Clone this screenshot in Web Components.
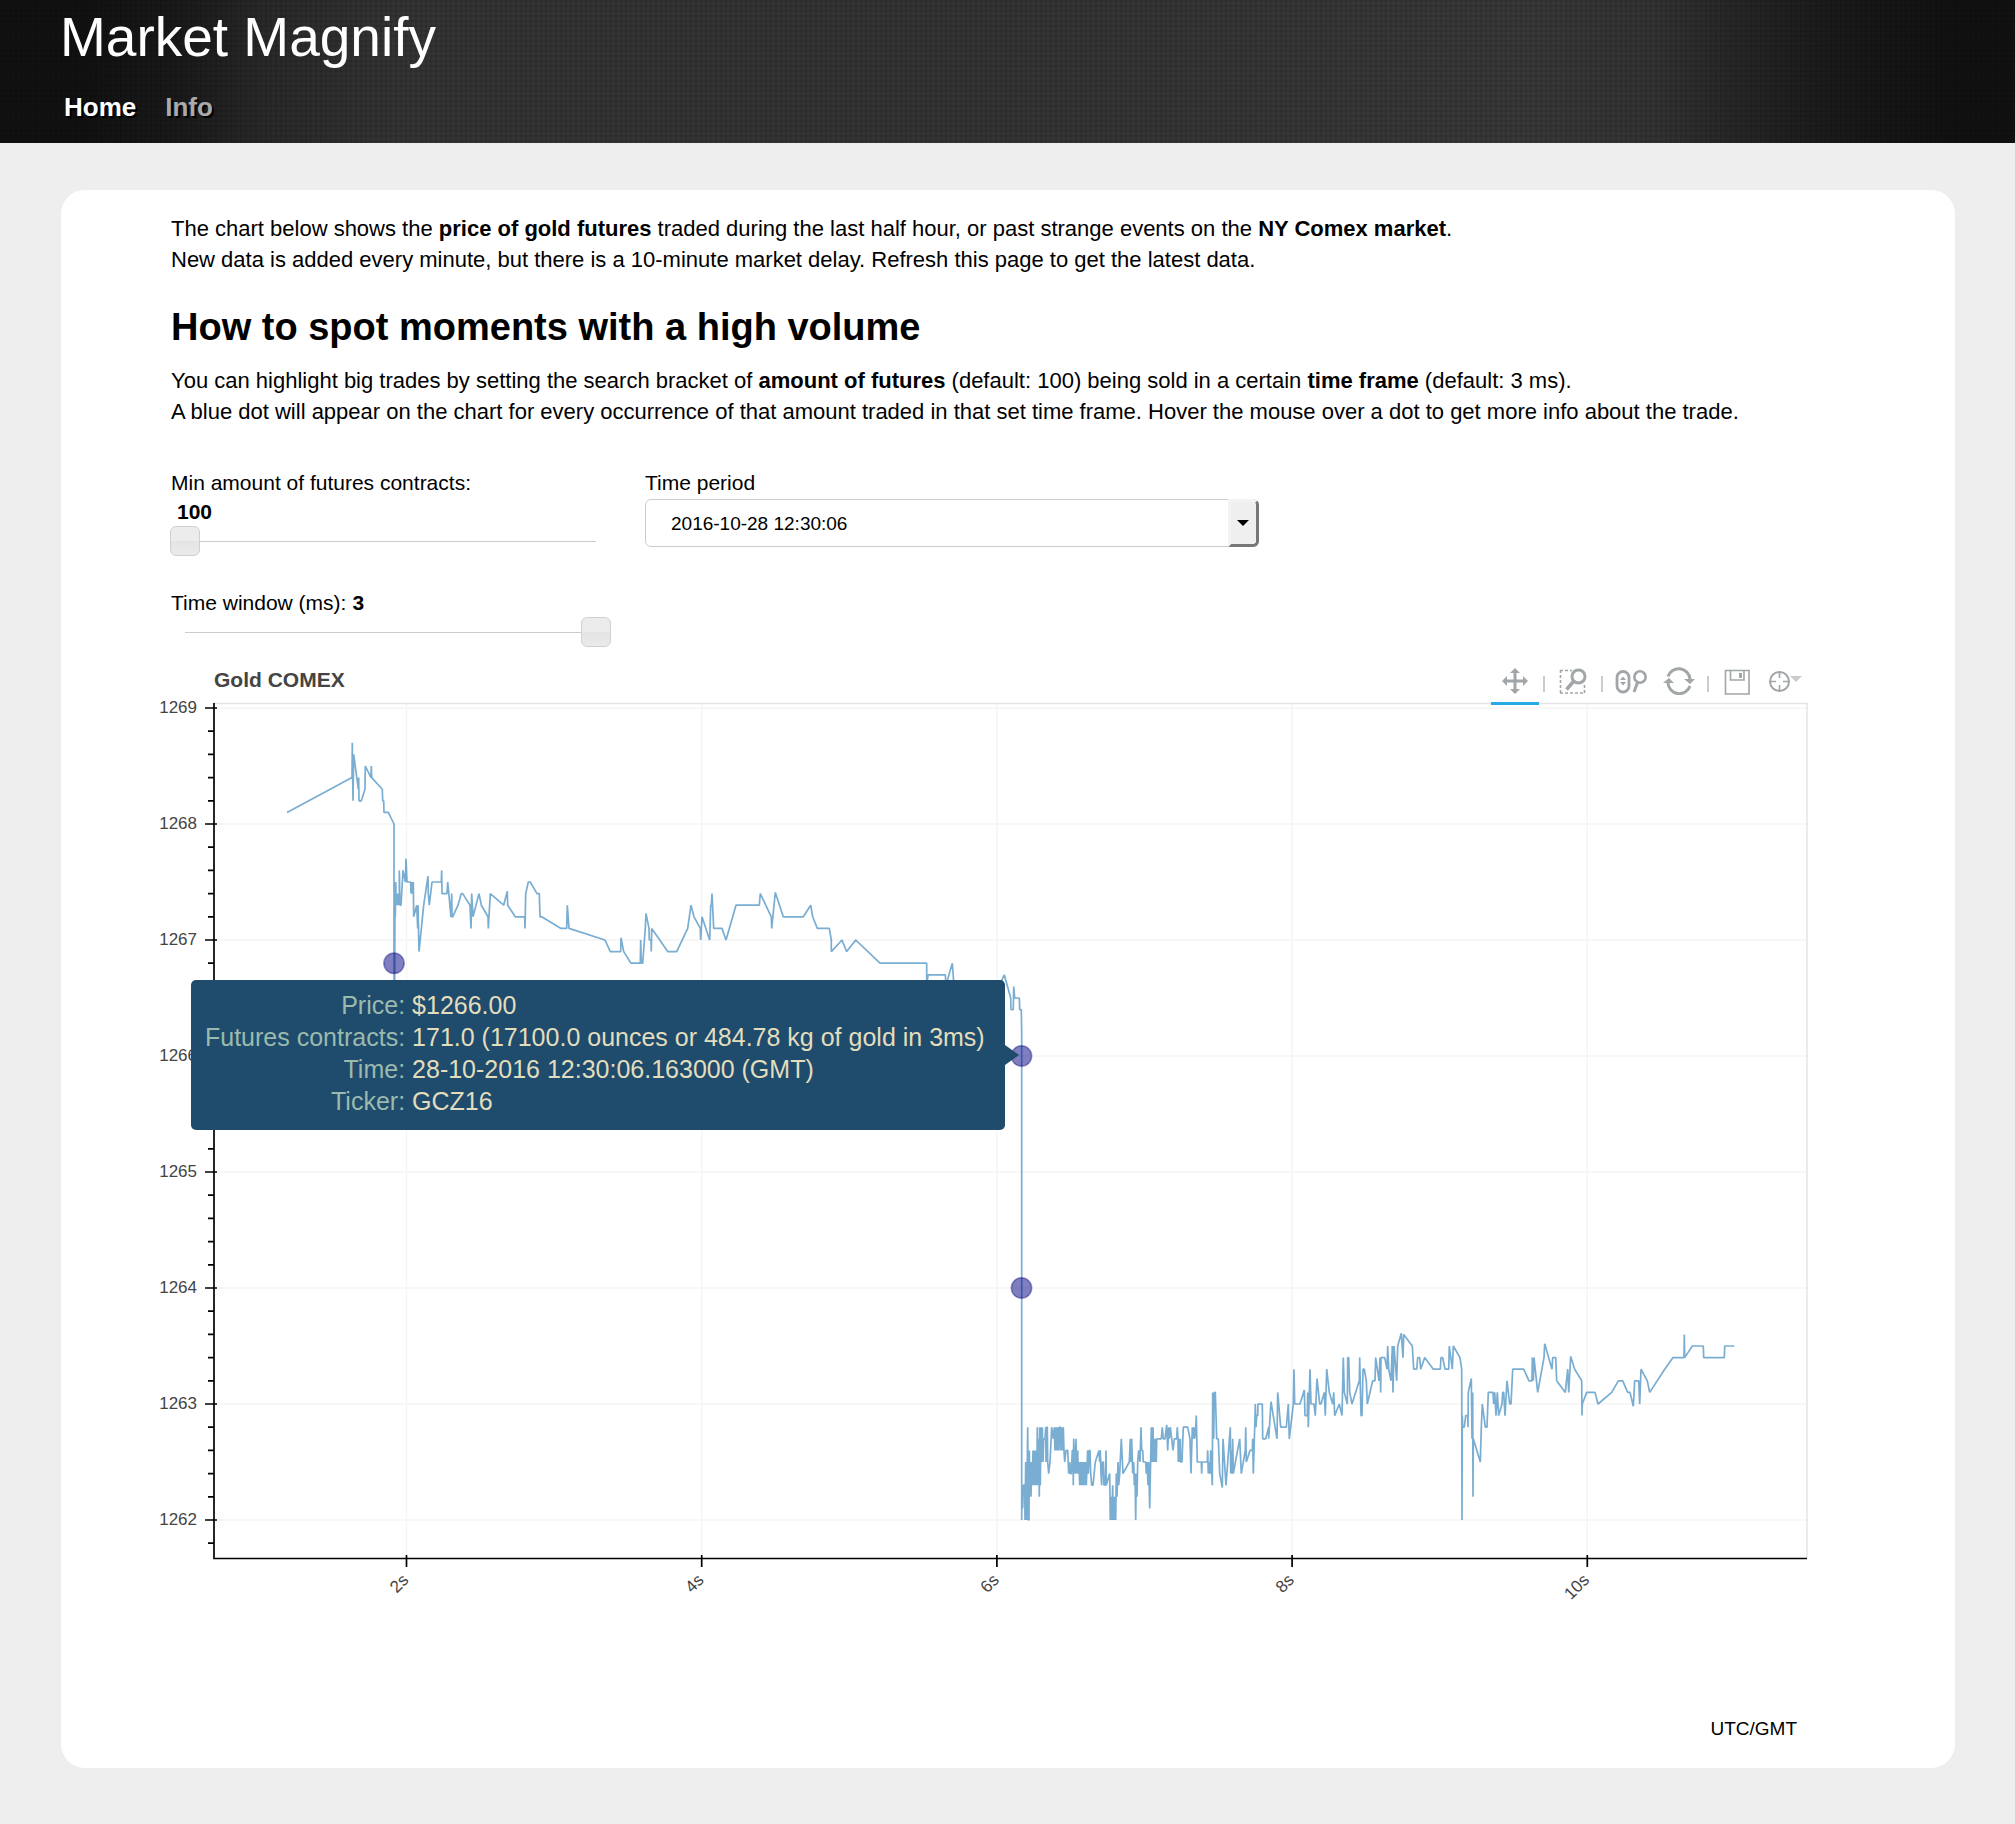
<!DOCTYPE html>
<html lang="en">
<head>
<meta charset="utf-8">
<title>Market Magnify</title>
<style>
  body {
    margin: 0;
    background-color: #eee;
    color: #000;
    font-family: "Liberation Sans", Arial, sans-serif;
    font-size: 22px;
    line-height: 31px;
  }
  main { padding: 47px 60px 55px 61px; }
  p { margin: 0; }
  h2 {
    margin: 30px 0 16px;
    font-size: 38px;
    line-height: 44px;
  }
</style>
</head>
<body>

<site-header heading="Market Magnify">
  <a href="#home" class="active">Home</a>
  <a href="#info">Info</a>
</site-header>

<main>
  <content-card>
    <p>The chart below shows the <b>price of gold futures</b> traded during the last half hour, or past strange events on the <b>NY Comex market</b>.<br>
    New data is added every minute, but there is a 10-minute market delay. Refresh this page to get the latest data.</p>
    <h2>How to spot moments with a high volume</h2>
    <p>You can highlight big trades by setting the search bracket of <b>amount of futures</b> (default: 100) being sold in a certain <b>time frame</b> (default: 3 ms).<br>
    A blue dot will appear on the chart for every occurrence of that amount traded in that set time frame. Hover the mouse over a dot to get more info about the trade.</p>
    <trade-filters></trade-filters>
    <price-chart heading="Gold COMEX">
      <chart-tooltip>
        <span>Price:</span><span>$1266.00</span>
        <span>Futures contracts:</span><span>171.0 (17100.0 ounces or 484.78 kg of gold in 3ms)</span>
        <span>Time:</span><span>28-10-2016 12:30:06.163000 (GMT)</span>
        <span>Ticker:</span><span>GCZ16</span>
      </chart-tooltip>
    </price-chart>
    <span slot="footer">UTC/GMT</span>
  </content-card>
</main>

<script>
class SiteHeader extends HTMLElement {

  constructor() {
    super();
    this.attachShadow({mode: 'open'});
  }

  connectedCallback() {
    this.shadowRoot.innerHTML = this.template;
    this.shadowRoot.querySelector('h1').textContent = this.getAttribute('heading');
  }

  get template() {
    return `<style>
        :host {
          display: block;
          padding: 7px 60px 21px;
          background:
            repeating-linear-gradient(90deg, rgba(0,0,0,.09) 0 2px, transparent 2px 5px),
            repeating-linear-gradient(rgba(0,0,0,.09) 0 2px, transparent 2px 5px),
            linear-gradient(90deg, #111 4%, #1a1a1a 9%, #292929 13%, #343434 20%, #343434 50%, #383838 76%, #333 82%, #272727 86%, #1a1a1a 91%, #111 97%);
        }
        h1 {
          margin: 0 0 25px;
          color: #fff;
          font-size: 55px;
          font-weight: normal;
          line-height: 60px;
        }
        nav {
          display: flex;
          gap: 29px;
          padding-left: 4px;
          font-size: 26px;
          font-weight: bold;
          line-height: 30px;
        }
        ::slotted(a) {
          color: #aaa;
          text-decoration: none;
          text-shadow: 2px 2px 0 #000;
        }
        ::slotted(a.active) { color: #fff; }
      </style>
      <h1></h1>
      <nav><slot></slot></nav>
      `;
  }
}

customElements.define('site-header', SiteHeader);


class ContentCard extends HTMLElement {

  constructor() {
    super();
    this.attachShadow({mode: 'open'});
  }

  connectedCallback() {
    this.shadowRoot.innerHTML = this.template;
  }

  get template() {
    return `<style>
        :host {
          display: block;
          padding: 23px 146px 27px 110px;
          background-color: #fff;
          border-radius: 24px;
        }
        footer {
          margin-top: 109px;
          padding-right: 12px;
          font-size: 19px;
          line-height: 24px;
          text-align: right;
        }
      </style>
      <slot></slot>
      <footer><slot name="footer"></slot></footer>
      `;
  }
}

customElements.define('content-card', ContentCard);


class TradeFilters extends HTMLElement {

  constructor() {
    super();
    this.attachShadow({mode: 'open'});
  }

  connectedCallback() {
    this.shadowRoot.innerHTML = this.template;
    this.enlazar('amount');
    this.enlazar('window');
  }

  // keeps the number beside each label in step with its slider
  enlazar(id) {
    var slider = this.shadowRoot.getElementById(id);
    var valor = this.shadowRoot.getElementById(id + '-value');
    slider.addEventListener('input', function () {
      valor.textContent = slider.value;
    });
  }

  get template() {
    return `<style>
        :host {
          display: grid;
          grid-template-columns: minmax(0, 440px) minmax(0, 614px);
          column-gap: 34px;
          margin-top: 41px;
          font-size: 21px;
          line-height: 29px;
        }
        label, output { display: block; }
        output { font-weight: bold; }
        #amount-value { padding-left: 6px; }
        .inline { display: flex; gap: 6px; margin-top: 32px; }
        input {
          display: block;
          -webkit-appearance: none;
          appearance: none;
          width: calc(100% + 1px);
          height: 30px;
          margin: 0 0 0 -1px;
          background: linear-gradient(#ccc, #ccc) center / calc(100% - 30px) 1px no-repeat;
        }
        input::-webkit-slider-thumb {
          -webkit-appearance: none;
          box-sizing: border-box;
          width: 30px;
          height: 30px;
          border: 1px solid #d0d0d0;
          border-radius: 6px;
          background: linear-gradient(#ececec 50%, #e4e4e4 50%, #eaeaea);
        }
        .select {
          display: grid;
          margin-top: 2px;
        }
        select, .arrow { grid-area: 1 / 1; }
        select {
          -webkit-appearance: none;
          appearance: none;
          width: 100%;
          height: 48px;
          padding: 0 40px 0 25px;
          border: 1px solid #ccc;
          border-radius: 6px;
          background-color: #fff;
          color: #000;
          font: 19px "Liberation Sans", Arial, sans-serif;
        }
        .arrow {
          display: grid;
          place-items: center;
          justify-self: end;
          box-sizing: border-box;
          width: 31px;
          height: 48px;
          padding-right: 2px;
          border: 3px solid #777;
          border-top-color: #f3f3f3;
          border-left-color: #f3f3f3;
          border-radius: 0 6px 6px 0;
          background-color: #efefef;
          pointer-events: none;
        }
      </style>
      <div>
        <label for="amount">Min amount of futures contracts:</label>
        <output id="amount-value" for="amount">100</output>
        <input type="range" id="amount" min="100" max="500" value="100">
        <div class="inline">
          <label for="window">Time window (ms):</label>
          <output id="window-value" for="window">3</output>
        </div>
        <input type="range" id="window" min="1" max="3" value="3">
      </div>
      <div>
        <label for="period">Time period</label>
        <div class="select">
          <select id="period"><option>2016-10-28 12:30:06</option></select>
          <span class="arrow"><svg width="12" height="6"><path d="M0 0h12L6 6z"/></svg></span>
        </div>
      </div>
      `;
  }
}

customElements.define('trade-filters', TradeFilters);


class ChartToolbar extends HTMLElement {

  constructor() {
    super();
    this.attachShadow({mode: 'open'});
  }

  connectedCallback() {
    this.shadowRoot.innerHTML = this.template;
    var botones = this.shadowRoot.querySelectorAll('button');
    for (let b of botones) {
      b.addEventListener('click', function () {
        for (let x of botones) x.classList.remove('active');
        b.classList.add('active');
      });
    }
  }

  get template() {
    return `<style>
        :host { display: flex; align-items: center; }
        button {
          width: 48px;
          height: 48px;
          padding: 2px 0 0;
          border: 0;
          border-bottom: 3px solid transparent;
          background: none;
          cursor: pointer;
        }
        button.active { border-bottom-color: #26aae1; }
        svg { display: block; margin: auto; fill: none; stroke: #a1a6a9; }
        .line {
          width: 2px;
          height: 16px;
          margin: 6px 4px 0;
          background-color: #ccc;
        }
      </style>
      <button class="active" aria-label="Pan">
        <svg width="34" height="28" stroke-width="3">
          <path d="M17 4v20M7 14h20"/>
          <path d="M17 1l5 5h-10zM17 27l5-5h-10zM4 14l5-5v10zM30 14l-5-5v10z" fill="#a1a6a9" stroke="none"/>
        </svg>
      </button>
      <span class="line"></span>
      <button aria-label="Box zoom">
        <svg width="34" height="28">
          <path d="M4 3.500h12M4.500 3v23M4 26h25M28.500 26v-9" stroke-width="1.600" stroke-dasharray="3 2"/>
          <circle cx="22.500" cy="9.500" r="6.500" stroke-width="3"/>
          <path d="M17.500 14.500L10.500 22.500" stroke-width="3.500"/>
        </svg>
      </button>
      <span class="line"></span>
      <button aria-label="Wheel zoom">
        <svg width="34" height="28">
          <rect x="3" y="4.500" width="12" height="20.500" rx="6" stroke-width="2.800"/>
          <path d="M6 13l3-3.500 3 3.500zM6 15l3 3.500 3-3.500z" fill="#a1a6a9" stroke="none"/>
          <circle cx="26" cy="10" r="5.700" stroke-width="2.600"/>
          <path d="M23.500 15.500l-3.500 9.500" stroke-width="3"/>
        </svg>
      </button>
      <button aria-label="Reset">
        <svg width="34" height="28">
          <path d="M6 9.500A11.300 11.300 0 0 1 28 12M28 19A11.300 11.300 0 0 1 6 16" stroke-width="3"/>
          <path d="M22 12h11l-5 5zM1 16h11l-5-5z" fill="#a1a6a9" stroke="none"/>
        </svg>
      </button>
      <span class="line"></span>
      <button aria-label="Save">
        <svg width="34" height="28" stroke-width="1.600">
          <path d="M5.500 3.500h23.500v23.500h-23.500zM10.500 3.500v9.500h13.500v-9.500"/>
          <path d="M19 6h3v5h-3z" fill="#a1a6a9" stroke="none"/>
        </svg>
      </button>
      <button aria-label="Crosshair">
        <svg width="34" height="28">
          <circle cx="11.500" cy="14.500" r="9.500" stroke-width="2"/>
          <path d="M11.500 4v7M11.500 18v7M1 14.500h7M15 14.500h7" stroke-width="1.600"/>
          <path d="M22 9h12l-6 6z" fill="#ccc" stroke="none"/>
        </svg>
      </button>
      `;
  }
}

customElements.define('chart-toolbar', ChartToolbar);


class ChartTooltip extends HTMLElement {

  constructor() {
    super();
    this.attachShadow({mode: 'open'});
  }

  connectedCallback() {
    this.shadowRoot.innerHTML = this.template;
    // children come in pairs: a label, then its value
    var dl = this.shadowRoot.querySelector('dl');
    var partes = this.querySelectorAll('span');
    for (let i = 0; i < partes.length; i++) {
      var celda = document.createElement(i % 2 ? 'dd' : 'dt');
      var hueco = document.createElement('slot');
      hueco.name = partes[i].slot = 'c' + i;
      celda.appendChild(hueco);
      dl.appendChild(celda);
    }
  }

  get template() {
    return `<style>
        :host {
          display: block;
          padding: 9px 20px 13px 14px;
          border-radius: 5px;
          background-color: #1f4b6c;
          font-size: 25px;
          line-height: 32px;
          white-space: nowrap;
        }
        :host::after {
          content: "";
          position: absolute;
          left: 100%;
          top: calc(50% - 10px);
          border: 10px solid transparent;
          border-left: 14px solid #1f4b6c;
          border-right: 0;
        }
        dl {
          display: grid;
          grid-template-columns: auto auto;
          column-gap: 7px;
          margin: 0;
        }
        dt { color: #9bbaae; text-align: right; }
        dd { margin: 0; color: #e2ddbd; }
      </style>
      <dl></dl>
      `;
  }
}

customElements.define('chart-tooltip', ChartTooltip);


// Ticks of the gold price. Each run starts at an offset; then come pairs
// "step,tenths": thirds of a unit to the right, tenths of a dollar over 1262
var PRECIOS = [
  [-10, `411,61 606,64 607,67 609,62 611,66 625,63 626,64 627,62 634,62 645,63 646,65 663,64 664,65 665,64
    697,63 698,62 701,62 702,61 715,61 732,60 732,46 734,46 735,54 736,52 737,55 739,53 741,54 743,53 745,54
    748,53 748,56 750,53 753,53 759,56 766,55 768,57 771,55 782,55 783,54 787,55 788,54 790,55 791,52 800,53
    803,51 804,53 807,49 821,53 834,55.5 835,54 838,53 846,55 874,55 875,56 876,54 891,54 893,55 903,52
    905,54 906,52 908,52 924,53 934,54 938,54 960,53 963,51 965,54 969,52 987,54 994,53 1014,52 1015,51
    1021,54 1061,53 1072,54.2 1073,53 1096,52 1124,52 1125,51 1127,54 1135,55 1141,55 1161,54 1168,54
    1170,52 1175,52 1233,51 1250,51 1252,53 1257,51`],
  [390, `165,50 181,49 212,49 213,50.2 221,49 243,48 271,48 272,50 274,48 278,48 286,51 288,52.3 297,51 298,50
    303,50 304,49 305,51 353,49 380,49 413,51 423,53 432,52 451,51 452,50 456,52 479,50 482,53 484,53
    486,54 491,51 516,51 528,50 558,53 628,53 631,54 664,52 665,51 676,54.1 700,52 760,52 782,53 788,52
    802,51 838,51 844,50 844,49 876,50 890,49 917,50 990,48 1130,48 1130,46 1134,47 1186,47 1188,46
    1192,46.5 1207,48 1212,46 1340,46 1355,46.5 1363,47 1382,45 1383,44 1390,44 1391,46 1394,45 1408,45
    1409,44 1414,44`],
  [840, `65,42 65,0 66,3 68,1 70,3 74,3 75,0 77,5 79,2 80,0 82,5 83,8 85,0 87,0 88,6 90,2 92,5 93,2 95,5 97,3
    99,6 101,3 103,6 105,3 107,6 109,3 111,5 112,8 114,3 116,7 118,2 119,8 121,3 123,8 125,5 127,8 129,5
    131,7 135,7 137,8 138,5 140,8 142,8 143,5 146,4 150,5 155,8 160,7 163,8 165,6 167,8 169,6 171,8 173,6
    175,8 177,6 178,8 181,8 183,6 185,8 187,6 190,8 192,6 194,5 198,6 203,6 206,4 209,5 211,4 214,4 217,6
    219,6 220,3 221,7 225,4 228,7 230,4 233,6 235,4 237,5 239,3 242,5 244,3 247,5 249,3 252,5 254,3 257,5
    259,3 263,6 265,4 268,6 270,6 272,4 275,3 279,3 286,5 297,6 299,5 301,6 303,4 305,3 307,5 310,5 312,3
    316,3 318,6 319,3 329,4 331,0 333,2 335,0 338,3 340,0 342,2 344,0 346,2 347,0 349,4 351,2 354,5 356,3
    359,4 364,7 369,4 388,5 391,7 393,5 395,7 398,4 401,5 403,3 405,4 407,0 409,4 411,2 413,5 416,6 420,5
    423,8 425,6 428,6 430,5 437,5 439,4 442,5 444,3 446,5 449,1 454,8 457,5 459,8 461,5 463,7 465,5 467,7
    469,5 470,7 484,7 487,8 490,7 495,7 500,8.2 503,6 506,8 508,7 511,8 515,7 519,6 523,7 530,7 532,8 534,7
    535,5 537,7 539,5 541,7 542,5 546,5 550,8 563,8 570,7 573,4 577,8 580,7 582,8 584,7 587,8 589,9 592,5
    604,5 605,4 606,5 622,5 623,6 625,4 628,5 630,4 632,6 637,3 638,11 641,7 643,11 646,11 650,7 655,7
    659,4 667,2.8 669,7 678,3 691,8 692,4 694,6 696,4 698,7 700,4 719,7 724,4 736,6 737,8 739,5 750,6
    757,6 758,7 760,4 764,8 766,10 768,8 770,9 773,9 774,10 787,10 788,7 797,7 806,8 806,7 813,10.2 831,7
    833,11 842,8 859,8 865,10 868,7 880,10 882,13 884,10 900,10 913,11.2 915,9 922,9 923,11 925,8 930,13
    933,10 942,10 946,9 951,12.2 959,10 963,10 973,11 976,9 980,13 988,11 998,10 1001,11 1004,9 1018,10
    1026,9 1030,14 1033,11 1042,10 1043,14 1046,14 1049,11 1056,10 1078,12 1079,14 1083,9 1086,9 1089,13
    1093,13 1099,12 1102,10 1118,12 1125,12 1127,14 1137,12 1140,14 1142,11 1143,14 1154,14 1161,13
    1163,15 1166,13 1173,12 1177,15 1179,11 1182,15 1190,12 1193,15 1204,16.1 1209,14 1211,16 1237,15`],
  [1220, `97,15 101,13 110,13 113,14 119,14 122,13 134,14 160,13 181,13 183,14 188,14 195,13 206,13 208,15
    217,13 220,15 240,14 245,13 246,0 247,9 248,8 253,8 257,9 263,9 264,8 265,11 274,12.2 276,7 278,11
    279,2 280,7 301,5 304,8 307,10 316,8 321,8 325,11 339,11 341,10 344,11 348,9 352,11 356,9 366,10
    368,11 371,11 375,9 381,12 389,10 393,10 398,13 431,13 447,12 456,12 457,14 460,12 462,14 473,11
    492,14 494,15.2 516,13 518,14 527,14 530,12 556,11 563,13 566,11 572,14.1 584,13 605,12 606,9 607,10
    620,11 645,11 654,10 695,11 715,12 728,12 743,11 750,11 760,9.8 764,12 776,12 779,10 783,13 802,12
    809,11 854,13 879,14 912,14 913,16 914,14 937,15 970,15 971,14 1033,14 1034,15 1063,15`]
];

class PriceChart extends HTMLElement {

  constructor() {
    super();
    this.attachShadow({mode: 'open'});
  }

  connectedCallback() {
    this.shadowRoot.innerHTML = this.template;
    this.shadowRoot.querySelector('h3').textContent = this.getAttribute('heading');
    this.shadowRoot.querySelector('#plot').innerHTML = this.rejilla() + this.ejes() + this.serie() + this.puntos();
  }

  y(precio) {
    return 818 - (precio - 1262) * 116;
  }

  x(segundos) {
    return 246.5 + (segundos - 2) * 147.6;
  }

  rejilla() {
    var d = '';
    for (let p = 1262; p <= 1269; p++) d += `M54 ${this.y(p)}H1647`;
    for (let s = 2; s <= 10; s += 2) d += `M${this.x(s)} 1V856`;
    return `<path d="${d}" stroke="#f5f5f5" stroke-width="1.5"/>
      <path d="M54 1.5H1647V856" stroke="#e5e5e5" stroke-width="1.5"/>`;
  }

  ejes() {
    var d = 'M54 1V856.500H1647';
    var textos = '';
    for (let i = -1; i <= 35; i++) {
      var p = 1262 + i / 5;
      var y = this.y(p);
      d += i % 5 ? `M48 ${y}H54` : `M45 ${y}H57`;
      if (i % 5 == 0) textos += `<text x="37" y="${y + 5}" text-anchor="end">${p}</text>`;
    }
    for (let s = 2; s <= 10; s += 2) {
      var x = this.x(s);
      d += `M${x} 853V865`;
      textos += `<text transform="translate(${x + 3} 879) rotate(-45)" text-anchor="end">${s}s</text>`;
    }
    return `<path d="${d}" stroke="#000" stroke-width="1.7"/>${textos}`;
  }

  serie() {
    var puntos = [];
    for (let [inicio, datos] of PRECIOS) {
      for (let par of datos.trim().split(/\s+/)) {
        var [dx, v] = par.split(',');
        puntos.push((inicio + dx / 3).toFixed(1) + ',' + this.y(1262 + v / 10).toFixed(1));
      }
    }
    return `<polyline points="${puntos.join(' ')}" stroke="#1f77b4" stroke-opacity=".6" stroke-width="1.7" stroke-linejoin="bevel"/>`;
  }

  puntos() {
    var html = '';
    for (let [cx, precio] of [[234, 1266.8], [861.5, 1266], [861.5, 1264]]) {
      html += `<circle cx="${cx}" cy="${this.y(precio)}" r="10.2" fill="navy" fill-opacity=".5" stroke="navy" stroke-opacity=".4" stroke-width="1.5"/>`;
    }
    return html;
  }

  get template() {
    return `<style>
        :host {
          display: block;
          position: relative;
          margin: 10px 0 0 -11px;
        }
        header {
          display: flex;
          justify-content: space-between;
          align-items: center;
          padding-left: 54px;
          position: relative;
          z-index: 1;
        }
        h3 {
          margin: 0 0 3px;
          color: #444;
          font-size: 21px;
          line-height: 28px;
        }
        #plot {
          display: block;
          width: 100%;
          margin-top: -3px;
          overflow: visible;
          fill: none;
          font-size: 17px;
        }
        text { fill: #444; }
        ::slotted(chart-tooltip) {
          position: absolute;
          left: 31px;
          top: 323px;
          z-index: 2;
        }
      </style>
      <header>
        <h3></h3>
        <chart-toolbar></chart-toolbar>
      </header>
      <svg id="plot" viewBox="0 0 1649 906" role="img" aria-label="Price of gold futures"></svg>
      <slot></slot>
      `;
  }
}

customElements.define('price-chart', PriceChart);
</script>
</body>
</html>
